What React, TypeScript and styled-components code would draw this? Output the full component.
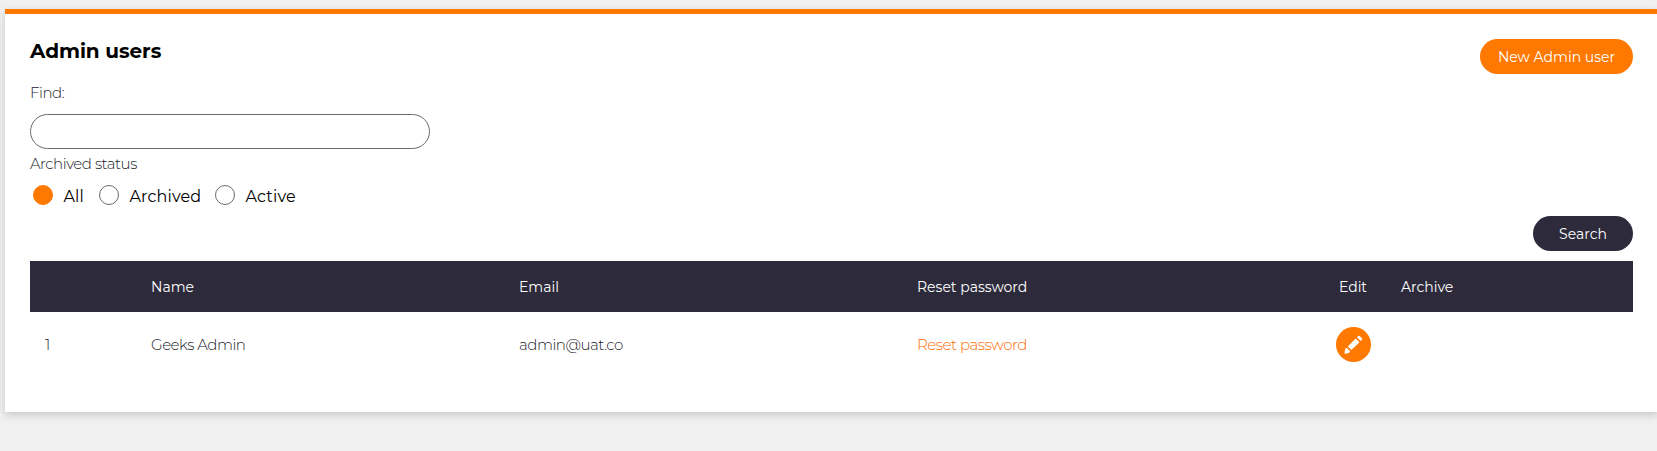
import React from 'react';
import styled, { createGlobalStyle } from 'styled-components';

const ORANGE = '#ff7800';
const NAVY = '#2d2b3b';

const GlobalStyle = createGlobalStyle`
  *, *::before, *::after { box-sizing: border-box; }
  html, body { margin: 0; height: 100%; }
  body {
    background: #f0f0f0;
    overflow: hidden;
    font-family: Montserrat, Inter, 'Open Sans', sans-serif;
    font-size: 14px;
    line-height: 20px;
    font-weight: 400;
    color: ${NAVY};
  }
`;

const Page = styled.main`
  padding: 9px 0 0 5px;
`;

const Card = styled.section`
  display: flex;
  flex-direction: column;
  width: 1653px;
  height: 403px;
  padding: 25px 25px 0;
  background: #fff;
  border-top: 5px solid ${ORANGE};
  box-shadow: 0 3px 8px rgba(0, 0, 0, 0.17);
`;

const Header = styled.header`
  display: flex;
  justify-content: space-between;
  align-items: flex-start;
  height: 44px;
`;

const Text = styled.span`
  white-space: nowrap;
`;

const LightText = styled(Text)<{ $color?: string }>`
  font-size: 15px;
  font-weight: 300;
  letter-spacing: -0.47px;
  color: ${({ $color = '#1c1a2b' }) => $color};
`;

const Title = styled.h1`
  margin: 0;
  font-size: 20px;
  line-height: 24px;
  font-weight: 700;
  letter-spacing: -0.05px;
  color: #000;
`;

const Button = styled.button<{ $dark?: boolean; $width: number }>`
  width: ${({ $width }) => $width}px;
  height: 35px;
  padding: 0;
  border: 0;
  border-radius: 17.5px;
  background: ${({ $dark }) => ($dark ? NAVY : ORANGE)};
  color: #fff;
  font: inherit;
`;

const Label = styled.label`
  height: 20px;
  display: block;
`;

const FindInput = styled.input`
  width: 400px;
  height: 35px;
  margin: 11px 0 5px;
  padding: 0 16px;
  border: 1px solid #6b6b6b;
  border-radius: 17.5px;
  background: #fff;
  font: inherit;
  outline: 0;
`;

const RadioGroup = styled.div`
  display: flex;
  align-items: center;
  height: 20px;
  margin: 11px 0 11px 3px;
  color: #000;
  font-size: 16px;
  letter-spacing: 0.15px;
`;

const Option = styled.label<{ $width: number }>`
  display: flex;
  align-items: center;
  gap: 10.5px;
  width: ${({ $width }) => $width}px;

  ${Text} {
    padding-top: 4px;
  }
`;

const Radio = styled.input`
  appearance: none;
  flex: none;
  width: 20px;
  height: 20px;
  margin: 0;
  border: 1px solid #6b6b6b;
  border-radius: 50%;
  background: #fff;
  &:checked {
    border-color: ${ORANGE};
    background: ${ORANGE};
  }
`;

const Actions = styled.div`
  display: flex;
  justify-content: flex-end;
  margin-bottom: 10px;
`;

const Table = styled.div`
  display: flex;
  flex-direction: column;
`;

const Row = styled.div<{ $head?: boolean }>`
  display: grid;
  grid-template-columns: 106px 368px 398px 420px 64px 1fr;
  align-items: center;
  height: ${({ $head }) => ($head ? 51 : 65)}px;
  background: ${({ $head }) => ($head ? NAVY : '#fff')};
  color: ${({ $head }) => ($head ? '#fff' : NAVY)};
`;

const Cell = styled.div<{ $center?: boolean }>`
  padding-left: ${({ $center }) => ($center ? 0 : 15)}px;
  padding-right: ${({ $center }) => ($center ? 2 : 0)}px;
  display: flex;
  justify-content: ${({ $center }) => ($center ? 'center' : 'flex-start')};
`;

const ResetLink = styled.a`
  text-decoration: none;
`;

const EditButton = styled.button`
  display: grid;
  place-items: center;
  width: 35px;
  height: 35px;
  padding: 0;
  border: 0;
  border-radius: 50%;
  background: ${ORANGE};
`;

const PencilIcon = () => (
  <svg width="19" height="19" viewBox="0 0 19 19" fill="#fff" aria-hidden="true">
    <path d="M14.2 1.1 Q15 .3 15.8 1.1 L18.1 3.4 Q18.7 4 18.1 4.6 L16.8 6 L12.9 2.4Z" />
    <path d="M11.7 3.5 L15.5 7.2 L7.4 15 L3.8 11.4Z" />
    <path d="M2.6 12.8 L6.1 16.3 L5 18 L1.2 18.7 Q.5 18.7 .5 18 L1.1 14.1Z" />
  </svg>
);

export default function App() {
  return (
    <Page>
      <GlobalStyle />
      <Card>
        <Header>
          <Title>Admin users</Title>
          <Button $width={153}>
            <Text>New Admin user</Text>
          </Button>
        </Header>

        <Label htmlFor="find"><LightText>Find:</LightText></Label>
        <FindInput id="find" />
        <Label as="div"><LightText>Archived status</LightText></Label>
        <RadioGroup>
          <Option $width={66}>
            <Radio type="radio" name="status" defaultChecked />
            <Text>All</Text>
          </Option>
          <Option $width={116}>
            <Radio type="radio" name="status" />
            <Text>Archived</Text>
          </Option>
          <Option $width={90}>
            <Radio type="radio" name="status" />
            <Text>Active</Text>
          </Option>
        </RadioGroup>

        <Actions>
          <Button $dark $width={100}><Text>Search</Text></Button>
        </Actions>

        <Table role="table">
          <Row $head role="row">
            <Cell />
            <Cell><Text>Name</Text></Cell>
            <Cell><Text>Email</Text></Cell>
            <Cell><Text>Reset password</Text></Cell>
            <Cell $center><Text>Edit</Text></Cell>
            <Cell><Text>Archive</Text></Cell>
          </Row>
          <Row role="row">
            <Cell><LightText>1</LightText></Cell>
            <Cell><LightText>Geeks Admin</LightText></Cell>
            <Cell><LightText>admin@uat.co</LightText></Cell>
            <Cell><ResetLink><LightText $color="#ff6a00">Reset password</LightText></ResetLink></Cell>
            <Cell $center><EditButton aria-label="Edit"><PencilIcon /></EditButton></Cell>
            <Cell />
          </Row>
        </Table>
      </Card>
    </Page>
  );
}
